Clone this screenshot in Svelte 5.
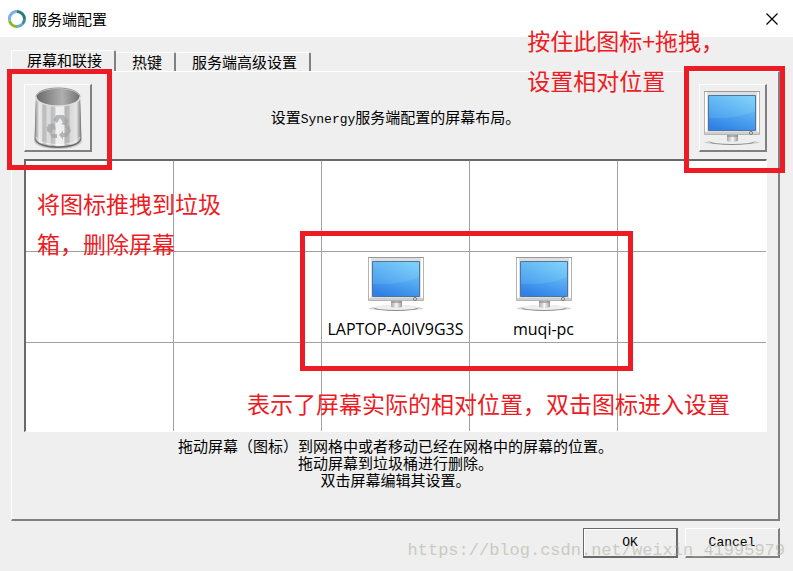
<script lang="ts">
  const tabs = ["屏幕和联接", "热键", "服务端高级设置"];
  let activeTab = $state(0);

  const columns = 5;
  const rows = 3;
  let screens = $state<Record<number, string>>({
    7: "LAPTOP-A0IV9G3S",
    8: "muqi-pc",
  });

  const cells = Array.from({ length: columns * rows }, (_, i) => i);

  const help = [
    "拖动屏幕（图标）到网格中或者移动已经在网格中的屏幕的位置。",
    "拖动屏幕到垃圾桶进行删除。",
    "双击屏幕编辑其设置。",
  ];
</script>

<svelte:head>
  <title>服务端配置</title>
</svelte:head>

{#snippet monitor()}
  <svg class="monitor" viewBox="0 0 56 54" aria-hidden="true">
    <defs>
      <linearGradient id="glass" x1="0.7" y1="0" x2="0.3" y2="1">
        <stop offset="0" stop-color="#7bcdf8" />
        <stop offset="0.5" stop-color="#52a8f0" />
        <stop offset="1" stop-color="#2f7fe6" />
      </linearGradient>
      <linearGradient id="shine" x1="0" y1="0" x2="1" y2="0.2">
        <stop offset="0" stop-color="#6abdf6" />
        <stop offset="1" stop-color="#8ad6fa" />
      </linearGradient>
      <linearGradient id="stand" x1="0" y1="0" x2="1" y2="0">
        <stop offset="0" stop-color="#a8a8a8" />
        <stop offset="0.5" stop-color="#f4f4f4" />
        <stop offset="1" stop-color="#9c9c9c" />
      </linearGradient>
    </defs>
    <ellipse cx="28" cy="51.5" rx="27.5" ry="2" fill="#b4b4b4" opacity="0.6" />
    <ellipse cx="28" cy="51" rx="22" ry="3" fill="#8c8c8c" />
    <ellipse cx="28" cy="50.3" rx="22" ry="2.6" fill="#efefef" />
    <path d="M23 43h11v7q-5.500 2-11 0z" fill="url(#stand)" />
    <path d="M23 44h11v2h-11z" fill="#888" opacity="0.6" />
    <path d="M.5.5h55v43H.5z" fill="#dedede" stroke="#b4b4b4" />
    <path d="M2 1v40M54 1v40" stroke="#fff" stroke-width="2" />
    <path d="M0 .5h56" stroke="#999" />
    <path d="M1 41h54v2H1z" fill="#cfcfcf" />
    <path d="M4.500 4.500h47v35h-47z" fill="url(#glass)" stroke="#4a76a0" />
    <path d="M5 5h46v15Q34 28 5 27z" fill="url(#shine)" opacity="0.25" />
    <circle cx="47" cy="42" r="1.500" fill="#eee" stroke="#666" stroke-width="0.9" />
  </svg>
{/snippet}

<main>
  <header>
    <svg class="logo" viewBox="0 0 18 18" aria-hidden="true">
      <g fill="none" stroke-width="3">
        <path d="M9 1.500a7.500 7.500 0 0 1 7.500 7.500" stroke="#2a7c7c" />
        <path d="M16.500 9a7.500 7.500 0 0 1-2 5" stroke="#3d8c96" />
        <path d="M14.500 14a7.500 7.500 0 0 1-5.500 2.500" stroke="#68a6e0" />
        <path d="M9 16.500a7.500 7.500 0 0 1-7.500-6" stroke="#8fb82a" />
        <path d="M1.500 10.500A7.500 7.500 0 0 1 9 1.500" stroke="#7fb0ee" />
      </g>
    </svg>
    <h1>服务端配置</h1>
    <button class="close" aria-label="关闭">
      <svg viewBox="0 0 12 12" aria-hidden="true">
        <path d="M.5.5l11 11M11.500.5l-11 11" stroke="#000" stroke-width="1.200" />
      </svg>
    </button>
  </header>

  <div class="content">
    <div class="tabs" role="tablist">
      {#each tabs as tab, i (tab)}
        <button role="tab" aria-selected={i === activeTab} class:active={i === activeTab} onclick={() => (activeTab = i)}>
          {tab}
        </button>
      {/each}
    </div>

    <section class="panel">
      <div class="toolbar">
        <div class="tool">
          <button class="tile" aria-label="垃圾桶">
            <svg class="trash" viewBox="0 0 48 64" aria-hidden="true">
              <defs>
                <linearGradient id="metal" gradientUnits="userSpaceOnUse" x1="1" y1="0" x2="47" y2="0">
                  <stop offset="0" stop-color="#8c8c8c" />
                  <stop offset="0.05" stop-color="#c0c0c0" />
                  <stop offset="0.1" stop-color="#ededed" />
                  <stop offset="0.15" stop-color="#e0e0e0" />
                  <stop offset="0.17" stop-color="#bcbcbc" />
                  <stop offset="0.24" stop-color="#c0c0c0" />
                  <stop offset="0.26" stop-color="#dcdcdc" />
                  <stop offset="0.33" stop-color="#dadada" />
                  <stop offset="0.36" stop-color="#bdbdbd" />
                  <stop offset="0.43" stop-color="#c7c7c7" />
                  <stop offset="0.46" stop-color="#f0f0f0" />
                  <stop offset="0.62" stop-color="#ededed" />
                  <stop offset="0.66" stop-color="#b4b4b4" />
                  <stop offset="0.74" stop-color="#bcbcbc" />
                  <stop offset="0.77" stop-color="#d9d9d9" />
                  <stop offset="0.9" stop-color="#e4e4e4" />
                  <stop offset="1" stop-color="#808080" />
                </linearGradient>
                <linearGradient id="inside">
                  <stop offset="0" stop-color="#686868" />
                  <stop offset="0.6" stop-color="#b0b0b0" />
                  <stop offset="1" stop-color="#707070" />
                </linearGradient>
              </defs>
              <ellipse cx="24" cy="55" rx="24" ry="8" fill="#aaa" opacity="0.5" />
              <path d="M2 11L.5 53c2 12 45 12 47 0L46 11z" fill="#6c6c6c" />
              <path d="M2 11L1 52c2 11 44 11 46 0L46 11z" fill="url(#metal)" />
              <path d="M2 51c3 10 41 10 44 0" fill="none" stroke="#fff" opacity="0.6" />
              <ellipse cx="24" cy="11" rx="22" ry="9" fill="url(#inside)" stroke="#dedede" stroke-width="1.500" />
              <path d="M2 11c1-12 43-12 44 0" fill="none" stroke="#888" stroke-width="0.8" />
              <g fill="#a0a4a8" opacity="0.75">
                <path d="M19 34l3.500-5h7l3.500 5 2-1-2 7-6-2 2-1.500-3-4.500-3 5z" />
                <path d="M13 39l7-2 2 7-2.500-1-2.500 5-4-3-.5-4 2-1z" />
                <path d="M31 41l4-2 2 6-4 6h-4v2.500l-4-4.500 4-4.500v2.500h2.500l1.500-3z" />
                <path d="M16 48h7v4h-5z" />
              </g>
            </svg>
          </button>
          <div class="mark mark-trash"></div>
        </div>
        <p>设置<span class="latin">Synergy</span>服务端配置的屏幕布局。</p>
        <div class="tool">
          <button class="tile" aria-label="新屏幕">{@render monitor()}</button>
          <div class="mark mark-screen"></div>
          <p class="note note-drag">按住此图标+拖拽，<br />设置相对位置</p>
        </div>
      </div>

      <div class="board">
        <div class="grid">
          {#each cells as cell (cell)}
            <div class="cell">
              {#if screens[cell]}
                {@render monitor()}
                <span>{screens[cell]}</span>
              {/if}
            </div>
          {/each}
        </div>
        <div class="mark mark-layout"></div>
        <p class="note note-delete">将图标推拽到垃圾<br />箱，删除屏幕</p>
        <p class="note note-layout">表示了屏幕实际的相对位置，双击图标进入设置</p>
      </div>

      <div class="help">
        {#each help as line (line)}
          <p>{line}</p>
        {/each}
      </div>
    </section>

    <footer>
      <button class="default">OK</button>
      <button>Cancel</button>
      <span class="watermark">https://blog.csdn.net/weixin_41995979</span>
    </footer>
  </div>
</main>

<style>
  :global(body) {
    margin: 0;
    background: #efefef;
  }

  main {
    min-height: 100vh;
    display: flex;
    flex-direction: column;
    background: #efefef;
    color: #000;
    font: 15px/17px "Noto Sans CJK SC", sans-serif;
  }

  h1,
  p {
    margin: 0;
    font-size: inherit;
    font-weight: 400;
  }

  button {
    box-sizing: border-box;
    padding: 0;
    background: #efefef;
    color: inherit;
    font: inherit;
  }

  header {
    height: 37px;
    display: flex;
    align-items: center;
    gap: 6px;
    padding: 0 15px 0 8px;
    background: #fff;
  }

  .logo {
    width: 18px;
    height: 18px;
  }

  .close {
    display: flex;
    margin-left: auto;
    border: 0;
    background: none;
  }

  .close svg {
    width: 12px;
    height: 12px;
  }

  .content {
    flex: 1;
    display: flex;
    flex-direction: column;
    padding: 13px 13px 13px 11px;
  }

  .tabs {
    display: flex;
    align-items: flex-end;
    height: 21px;
  }

  .tabs button {
    height: 19px;
    padding: 0 12px 3px 16px;
    border: 1px solid #fff;
    border-right: 2px solid #808080;
    border-bottom: 0;
    border-left: 0;
    border-radius: 2px 2px 0 0;
  }

  .tabs button.active {
    height: 21px;
    padding-left: 15px;
    border-left: 1px solid #fff;
  }

  .panel {
    flex: 1;
    padding: 12px 11px 0 12px;
    border: 1px solid #fff;
    border-right: 2px solid #808080;
    border-bottom: 2px solid #808080;
  }

  .toolbar {
    display: flex;
    align-items: center;
    justify-content: space-between;
    padding-bottom: 7px;
  }

  .tool {
    position: relative;
    z-index: 1;
  }

  .tile {
    width: 68px;
    height: 68px;
    display: flex;
    align-items: center;
    justify-content: center;
    border: 1px solid #fff;
    border-right: 2px solid #808080;
    border-bottom: 2px solid #808080;
  }

  .monitor {
    width: 56px;
    height: 54px;
  }

  .trash {
    width: 48px;
    height: 64px;
  }

  .latin {
    font-family: "Liberation Mono", monospace;
    font-size: 13px;
  }

  .board {
    position: relative;
    border: 2px solid #696969;
    border-right: 1px solid #fff;
    border-bottom: 1px solid #fff;
  }

  .grid {
    display: grid;
    grid-template-columns: repeat(5, 1fr);
    grid-template-rows: 91px 91px 88px;
    background: #fff;
  }

  .cell {
    display: flex;
    flex-direction: column;
    align-items: center;
    gap: 10px;
    padding-top: 5px;
    border-right: 1px solid #a0a0a0;
    border-bottom: 1px solid #a0a0a0;
    font-family: "Open Sans", "Noto Sans", sans-serif;
    font-size: 16px;
  }

  .cell:nth-child(5n) {
    border-right: 0;
  }

  .cell:nth-child(n + 11) {
    border-bottom: 0;
  }

  .help {
    padding: 5px 0;
    text-align: center;
  }

  footer {
    position: relative;
    display: flex;
    justify-content: flex-end;
    gap: 7px;
    padding-top: 7px;
  }

  footer button {
    width: 95px;
    height: 30px;
    border: 1px solid #fff;
    border-right: 2px solid #808080;
    border-bottom: 2px solid #808080;
    font: 13px "Liberation Mono", monospace;
  }

  footer .default {
    border-color: #696969;
    box-shadow: inset 1px 1px #fff;
  }

  .watermark {
    position: absolute;
    right: -5px;
    bottom: -4px;
    color: #a5a998;
    opacity: 0.5;
    font: 17px/22px "Liberation Mono", monospace;
    pointer-events: none;
  }

  .mark {
    position: absolute;
    border: 5px solid #ed1c24;
    pointer-events: none;
  }

  .mark-trash {
    inset: -15px -20px -18px -17px;
  }

  .mark-screen {
    inset: -18px -18px -21px -15px;
  }

  .mark-layout {
    inset: 70px 18% 60px 37%;
  }

  .note {
    position: absolute;
    color: #ed1c24;
    font-size: 23px;
    line-height: 40px;
    white-space: nowrap;
    pointer-events: none;
  }

  .note-drag {
    top: -64px;
    right: 43px;
  }

  .note-delete {
    top: 22px;
    left: 11px;
  }

  .note-layout {
    right: 36px;
    bottom: 8px;
  }
</style>
